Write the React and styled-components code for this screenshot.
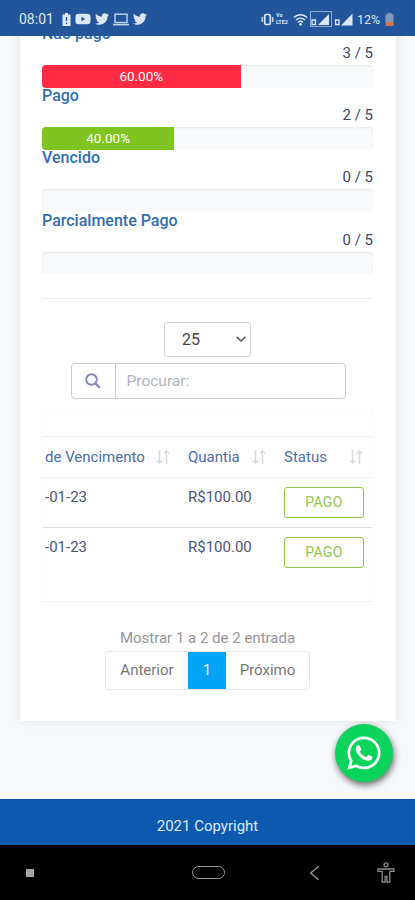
import React from 'react';
import styled, { createGlobalStyle } from 'styled-components';
import { FaTwitter, FaWhatsapp, FaYoutube } from 'react-icons/fa';

const progress = [
  { title: 'Não pago', count: '3 / 5', percent: 60, color: '#ff2b43' },
  { title: 'Pago', count: '2 / 5', percent: 40, color: '#7fc421' },
  { title: 'Vencido', count: '0 / 5', percent: 0 },
  { title: 'Parcialmente Pago', count: '0 / 5', percent: 0 },
];

const columns = ['de Vencimento', 'Quantia', 'Status'];

const invoices = [
  { due: '-01-23', amount: 'R$100.00', status: 'PAGO' },
  { due: '-01-23', amount: 'R$100.00', status: 'PAGO' },
];

function App() {
  return (
    <Screen>
      <GlobalStyle />
      <StatusBar />
      <Content>
        <Card>
          <ProgressList>
            {progress.map(({ title, count, percent, color }) => (
              <ProgressItem key={title}>
                <ProgressTitle>{title}</ProgressTitle>
                <ProgressCount>{count}</ProgressCount>
                <Track>
                  {percent > 0 && (
                    <Fill $color={color} style={{ width: `${percent}%` }}>
                      {percent.toFixed(2)}%
                    </Fill>
                  )}
                </Track>
              </ProgressItem>
            ))}
          </ProgressList>
          <Divider />
          <PageSize>
            <span>25</span>
            <svg width="12" height="8" viewBox="0 0 12 8">
              <path d="M1.5 1.7 6 6l4.5-4.3" fill="none" stroke="#555" strokeWidth="1.5" />
            </svg>
          </PageSize>
          <SearchBox>
            <SearchIcon>
              <svg width="18" height="18" viewBox="0 0 18 18">
                <circle cx="7.5" cy="7.5" r="5.3" fill="none" stroke="#8187b5" strokeWidth="1.9" />
                <path d="m11.5 11.5 4.3 4.3" stroke="#8187b5" strokeWidth="2.2" />
              </svg>
            </SearchIcon>
            <SearchInput placeholder="Procurar:" />
          </SearchBox>
          <TableWrap>
            <HeadRow>
              {columns.map((name) => (
                <HeadCell key={name}>
                  {name}
                  <SortIcon />
                </HeadCell>
              ))}
            </HeadRow>
            {invoices.map(({ due, amount, status }, index) => (
              <Row key={index}>
                <Cell>{due}</Cell>
                <Cell>{amount}</Cell>
                <StatusButton>{status}</StatusButton>
              </Row>
            ))}
          </TableWrap>
          <Info>Mostrar 1 a 2 de 2 entrada</Info>
          <Pagination>
            <PageButton $width="82px">Anterior</PageButton>
            <PageButton $width="38px" $active>
              1
            </PageButton>
            <PageButton $width="83px">Próximo</PageButton>
          </Pagination>
        </Card>
        <WhatsappButton>
          <FaWhatsapp size={38} />
        </WhatsappButton>
      </Content>
      <Footer>2021 Copyright</Footer>
      <NavBar />
    </Screen>
  );
}

export default App;

function StatusBar() {
  return (
    <TopBar>
      <TopGroup>
        <Clock>08:01</Clock>
        <svg width="9" height="13" viewBox="0 0 9 13">
          <path d="M3 0h3v1.5h2.5V13h-8V1.5H3z" fill="#dce6f5" />
          <path d="M4.500 4v4M4.500 9.500V11" stroke="#23559b" strokeWidth="1.3" />
        </svg>
        <FaYoutube size={16} />
        <FaTwitter size={14} />
        <svg width="16" height="13" viewBox="0 0 16 13">
          <rect x="2" y="1.2" width="12" height="8.3" fill="none" stroke="#c3d3ea" strokeWidth="1.4" />
          <path d="M0 11.6h16" stroke="#c3d3ea" strokeWidth="1.6" />
        </svg>
        <FaTwitter size={14} />
      </TopGroup>
      <SignalGroup>
        <svg width="13" height="13" viewBox="0 0 13 13">
          <rect x="3.7" y="1.5" width="5.6" height="10" rx="1.5" fill="none" stroke="#dce6f5" strokeWidth="1.7" />
          <path d="M1.2 4v5M11.8 4v5" stroke="#dce6f5" strokeWidth="1.3" />
        </svg>
        <Lte>
          <span>Vo</span>
          <span>LTE2</span>
        </Lte>
        <svg width="15" height="13" viewBox="0 0 15 13">
          <path
            d="M.8 4.500a9.500 9.500 0 0 1 13.400 0M3 7a6.400 6.400 0 0 1 9 0M5 9.300a3.500 3.500 0 0 1 5 0"
            fill="none"
            stroke="#dce6f5"
            strokeWidth="1.4"
          />
          <circle cx="7.5" cy="11.3" r="1.4" fill="#dce6f5" />
        </svg>
        <svg width="22" height="16" viewBox="0 0 22 16">
          <rect x=".5" y=".5" width="21" height="15" fill="none" stroke="#8eaad2" />
          <path d="M19 3v11H8z" fill="#dce6f5" />
          <path d="M2 9h3.500v4.500H2z" fill="none" stroke="#dce6f5" strokeWidth="1.3" />
        </svg>
        <svg width="19" height="16" viewBox="0 0 19 16">
          <path d="M18.500 2.500v12H7z" fill="#dce6f5" />
          <path d="M1.500 9H5v4.500H1.500z" fill="none" stroke="#dce6f5" strokeWidth="1.3" />
        </svg>
        <Battery>12%</Battery>
        <svg width="9" height="13" viewBox="0 0 9 13">
          <path d="M2.500 0h4v1.500h2V9h-8V1.500h2z" fill="#8398bd" />
          <path d="M.5 9h8v4h-8z" fill="#d9714a" />
        </svg>
      </SignalGroup>
    </TopBar>
  );
}

function SortIcon() {
  return (
    <svg width="14" height="16" viewBox="0 0 14 16">
      <path
        d="M3.500 1v13M1 11.500l2.500 2.700L6 11.500M10.500 15V2M8 4.500l2.500-2.700L13 4.500"
        fill="none"
        stroke="#d8dae0"
        strokeWidth="1.5"
      />
    </svg>
  );
}

function NavBar() {
  return (
    <BottomBar>
      <Recent />
      <Home />
      <svg width="11" height="16" viewBox="0 0 11 16">
        <path d="M9.500 1.200 1.800 8l7.700 6.800" fill="none" stroke="#929292" strokeWidth="1.5" />
      </svg>
      <svg width="18" height="21" viewBox="0 0 18 21">
        <g fill="none" stroke="#8b8b8b" strokeWidth="1.3">
          <circle cx="9" cy="2.8" r="2" />
          <path d="M1 7h16v2.300h-4.200V20H9.900v-5.500H8.100V20H5.200V9.300H1z" />
        </g>
      </svg>
    </BottomBar>
  );
}

const GlobalStyle = createGlobalStyle`
  * {
    box-sizing: border-box;
  }

  body {
    margin: 0;
    font-family: Roboto, 'Liberation Sans', sans-serif;
  }
`;

const Screen = styled.div`
  display: flex;
  flex-direction: column;
  width: 415px;
  height: 900px;
  overflow: hidden;
  background: #f8f9fc;
`;

const TopBar = styled.header`
  display: flex;
  flex: none;
  align-items: center;
  justify-content: space-between;
  height: 36px;
  padding: 2px 21px 0 19px;
  background: #23559b;
  color: #dce6f5;
`;

const TopGroup = styled.div`
  display: flex;
  align-items: center;
  gap: 4px;
`;

const SignalGroup = styled.div`
  display: flex;
  align-items: center;
  gap: 2px;
`;

const Clock = styled.span`
  width: 39px;
  font-size: 14px;
`;

const Lte = styled.span`
  display: flex;
  flex-direction: column;
  width: 15px;
  font-size: 5.5px;
  font-weight: 700;
  line-height: 7px;
`;

const Battery = styled.span`
  width: 26px;
  margin-left: 2px;
  font-size: 12.5px;
`;

const Content = styled.main`
  position: relative;
  flex: none;
  height: 763px;
  overflow: hidden;
`;

/* the page is scrolled, so the card starts above the visible area */
const Card = styled.section`
  display: flex;
  flex-direction: column;
  align-items: center;
  width: 376px;
  height: 705px;
  margin: -20px 0 0 20px;
  padding: 9px 23px 0 22px;
  background: #fff;
  box-shadow: 0 0 10px rgba(60, 70, 90, 0.13);
`;

const ProgressList = styled.div`
  width: 100%;
`;

const ProgressItem = styled.div`
  height: 62.2px;
`;

const ProgressTitle = styled.div`
  height: 19px;
  color: #2f6fac;
  font-size: 16px;
  font-weight: 500;
  line-height: 18px;
`;

const ProgressCount = styled.div`
  height: 21px;
  color: #3a4868;
  font-size: 15px;
  line-height: 18px;
  text-align: right;
`;

const Track = styled.div`
  height: 22.5px;
  overflow: hidden;
  border-radius: 4px;
  background: #f9fafc;
  box-shadow: inset 0 1px 2px rgba(0, 0, 0, 0.08);
`;

const Fill = styled.div`
  height: 100%;
  background: ${({ $color }) => $color};
  color: #fff;
  font-size: 13.5px;
  line-height: 23px;
  text-align: center;
`;

const Divider = styled.div`
  flex: none;
  width: 100%;
  height: 1px;
  margin: 24px 0 23px;
  background: #ececee;
`;

const PageSize = styled.div`
  display: flex;
  flex: none;
  align-items: center;
  justify-content: space-between;
  width: 87px;
  height: 35px;
  padding: 0 3px 0 17px;
  border: 1px solid #d0d3d9;
  border-radius: 3px;
  color: #444;
  font-size: 16px;
`;

const SearchBox = styled.div`
  display: flex;
  flex: none;
  width: 275px;
  height: 36px;
  margin: 6px 0 0 1px;
  border: 1px solid #c9ccd4;
  border-radius: 4px;
`;

const SearchIcon = styled.div`
  display: flex;
  align-items: center;
  justify-content: center;
  width: 44px;
  border-right: 1px solid #c9ccd4;
`;

const SearchInput = styled.input`
  flex: 1;
  min-width: 0;
  padding: 0 11px;
  border: 0;
  background: none;
  font-family: inherit;
  font-size: 15.5px;

  &::placeholder {
    color: #b0b4bb;
  }
`;

const TableWrap = styled.div`
  flex: none;
  width: 331px;
  height: 193px;
  margin-top: 10px;
  padding-top: 26px;
  border: 1px solid #fafafb;
  border-bottom-color: #f1f1f3;
`;

const columnLayout = `
  display: grid;
  grid-template-columns: 143px 96px 80px;
  padding-left: 2px;
`;

const HeadRow = styled.div`
  ${columnLayout}
  height: 42px;
  border-top: 1px solid #eeeef0;
  border-bottom: 1px solid #eeeef0;
`;

const HeadCell = styled.div`
  display: flex;
  align-items: center;
  justify-content: space-between;
  padding-right: 18px;
  color: #4f6da3;
  font-size: 15px;

  &:last-child {
    padding-right: 1px;
  }
`;

const Row = styled.div`
  ${columnLayout}
  height: 49px;
  padding-top: 9px;

  & + & {
    border-top: 1px solid #dddee2;
  }
`;

const Cell = styled.div`
  color: #4b5674;
  font-size: 15px;
  line-height: 20px;
`;

const StatusButton = styled.button`
  height: 31px;
  padding: 0;
  border: 1px solid #8fc64a;
  border-radius: 3px;
  background: none;
  color: #91c64f;
  font-family: inherit;
  font-size: 14px;
  letter-spacing: 0.3px;
`;

const Info = styled.div`
  margin-top: 26px;
  color: #969699;
  font-size: 15px;
  line-height: 20px;
`;

const Pagination = styled.div`
  display: flex;
  flex: none;
  height: 39px;
  margin-top: 3px;
  border: 1px solid #e7e8ea;
  border-radius: 4px;
`;

const PageButton = styled.button`
  width: ${({ $width }) => $width};
  padding: 0;
  border: 0;
  background: ${({ $active }) => ($active ? '#02a4f5' : 'none')};
  color: ${({ $active }) => ($active ? '#fff' : '#77787b')};
  font-family: inherit;
  font-size: 15px;
`;

const WhatsappButton = styled.button`
  position: absolute;
  right: 22px;
  bottom: 17px;
  display: flex;
  align-items: center;
  justify-content: center;
  width: 58px;
  height: 58px;
  padding: 0;
  border: 0;
  border-radius: 50%;
  background: #0bd45d;
  color: #fff;
  box-shadow: 1px 3px 7px rgba(0, 0, 0, 0.6);
`;

const Footer = styled.footer`
  flex: none;
  height: 46px;
  background: #0c59ad;
  color: #dbe9fa;
  font-size: 15px;
  line-height: 55px;
  text-align: center;
`;

const BottomBar = styled.nav`
  display: grid;
  flex: 1;
  grid-template-columns: 166px 117px 68px 18px;
  align-items: center;
  padding-left: 26px;
  background: #000;
`;

const Recent = styled.div`
  width: 8px;
  height: 8px;
  background: #a5a5a5;
`;

const Home = styled.div`
  width: 33px;
  height: 13px;
  border: 1.5px solid #999;
  border-radius: 7px;
`;
